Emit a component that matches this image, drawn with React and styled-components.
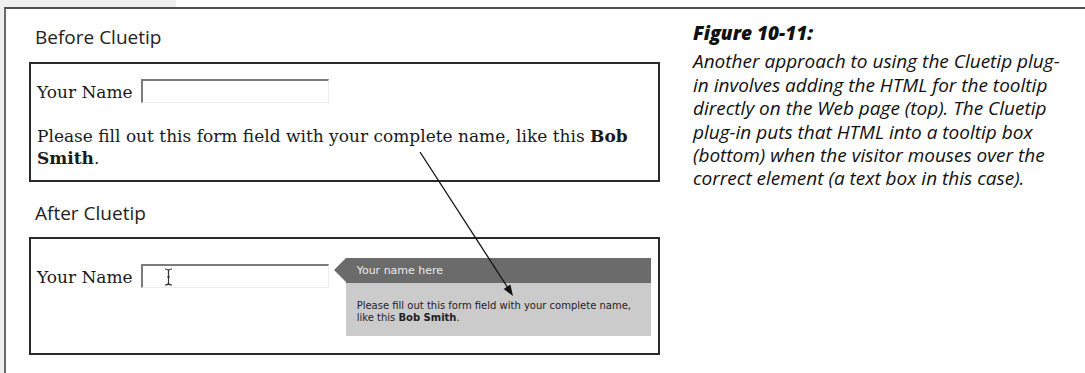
import styled, { createGlobalStyle } from "styled-components";

const GlobalStyle = createGlobalStyle`
  html, body {
    margin: 0;
    padding: 0;
    background: #ffffff;
  }
  #root {
    width: 1085px;
    height: 373px;
    overflow: hidden;
  }
`;

const Page = styled.div`
  position: relative;
  width: 1085px;
  height: 373px;
  display: flex;
  flex-direction: column;
`;

const TopStrip = styled.div`
  width: 176px;
  height: 7px;
  background: #efefef;
`;

const FrameRow = styled.div`
  flex: 1;
  display: flex;
`;

const Gutter = styled.div`
  width: 4px;
  background: #efefef;
`;

const Frame = styled.div`
  flex: 1;
  display: flex;
  border-top: 2px solid #505050;
  border-left: 2px solid #6a6a6a;
`;

const Demo = styled.div`
  width: 631px;
  padding-left: 23px;
  display: flex;
  flex-direction: column;
`;

const Heading = styled.div`
  font-family: "Open Sans", "Noto Sans", sans-serif;
  font-size: 19px;
  line-height: 24px;
  color: #222;
  padding-left: 6px;
  margin-top: ${(p) => p.$top}px;
  margin-bottom: ${(p) => p.$bottom}px;
`;

const DemoBox = styled.div`
  height: ${(p) => p.$height}px;
  box-sizing: border-box;
  border: 2px solid #2a2a2a;
  padding: ${(p) => p.$padTop}px 6px 0 6px;
  font-family: "DejaVu Serif", Georgia, serif;
  font-size: 17px;
  color: #1a1a1a;
`;

const FieldRow = styled.div`
  display: flex;
  align-items: center;
  gap: 8px;
  margin-top: ${(p) => p.$top || 0}px;
`;

const Label = styled.span`
  line-height: 20px;
  padding-top: 1px;
`;

const InputWrap = styled.div`
  position: relative;
  display: flex;
`;

const NameInput = styled.input`
  width: 188px;
  height: 24px;
  box-sizing: border-box;
  margin: 0;
  padding: 0;
  border-top: 2px solid #7c7c7c;
  border-left: 2px solid #7c7c7c;
  border-right: 1px solid #ececec;
  border-bottom: 1px solid #ececec;
  background: #fff;
  outline: none;
`;

const Cursor = styled.svg`
  position: absolute;
  left: 23px;
  top: 4px;
  pointer-events: none;
`;

const Para = styled.p`
  margin: 22px 0 0 0;
  max-width: 610px;
  line-height: 22px;
`;

const AfterRow = styled.div`
  display: flex;
  align-items: flex-start;
`;

const Tooltip = styled.div`
  position: relative;
  width: 305px;
  margin-left: 17px;
  font-family: "DejaVu Sans", Verdana, sans-serif;
`;

const TipHead = styled.div`
  height: 25px;
  background: #6b6b6b;
  color: #ececec;
  font-size: 11px;
  line-height: 25px;
  padding-left: 11px;

  &::before {
    content: "";
    position: absolute;
    left: -12px;
    top: 0;
    border-style: solid;
    border-width: 12.5px 12px 12.5px 0;
    border-color: transparent #6b6b6b transparent transparent;
  }
`;

const TipBody = styled.div`
  height: 53px;
  box-sizing: border-box;
  background: #cbcbcb;
  color: #1e1e1e;
  font-size: 10px;
  line-height: 12px;
  padding: 17px 0 0 11px;

  b {
    font-weight: bold;
  }
`;

const Caption = styled.div`
  padding-left: 33px;
  padding-top: 13px;
  font-family: "Open Sans", Lato, sans-serif;
  font-style: italic;
  font-size: 19px;
  line-height: 23.4px;
  color: #111;
  white-space: nowrap;
`;

const FigureTitle = styled.div`
  font-weight: 800;
  margin-bottom: 5px;
`;

const Overlay = styled.svg`
  position: absolute;
  left: 0;
  top: 0;
  pointer-events: none;
`;

function Field({ withCursor }) {
  return (
    <InputWrap>
      <NameInput type="text" readOnly />
      {withCursor && (
        <Cursor width="9" height="18" viewBox="0 0 9 18">
          <path
            d="M1 1 Q4.5 1 4.5 3 Q4.5 1 8 1 M4.5 3 V15 M1 17 Q4.5 17 4.5 15 Q4.5 17 8 17 M3 9 H6"
            fill="none"
            stroke="#333"
            strokeWidth="1.2"
          />
        </Cursor>
      )}
    </InputWrap>
  );
}

export default function App() {
  return (
    <>
      <GlobalStyle />
      <Page>
        <TopStrip />
        <FrameRow>
          <Gutter />
          <Frame>
            <Demo>
              <Heading $top={16} $bottom={13}>Before Cluetip</Heading>
              <DemoBox $height={120} $padTop={15}>
                <FieldRow>
                  <Label>Your Name</Label>
                  <Field />
                </FieldRow>
                <Para>
                  Please fill out this form field with your complete name, like this{" "}
                  <b>Bob Smith</b>.
                </Para>
              </DemoBox>
              <Heading $top={19} $bottom={12}>After Cluetip</Heading>
              <DemoBox $height={118} $padTop={19}>
                <AfterRow>
                  <FieldRow $top={6}>
                    <Label>Your Name</Label>
                    <Field withCursor />
                  </FieldRow>
                  <Tooltip>
                    <TipHead>Your name here</TipHead>
                    <TipBody>
                      Please fill out this form field with your complete name,
                      <br />
                      like this <b>Bob Smith</b>.
                    </TipBody>
                  </Tooltip>
                </AfterRow>
              </DemoBox>
            </Demo>
            <Caption>
              <FigureTitle>Figure 10-11:</FigureTitle>
              Another approach to using the Cluetip plug-
              <br />
              in involves adding the HTML for the tooltip
              <br />
              directly on the Web page (top). The Cluetip
              <br />
              plug-in puts that HTML into a tooltip box
              <br />
              (bottom) when the visitor mouses over the
              <br />
              correct element (a text box in this case).
            </Caption>
          </Frame>
        </FrameRow>
        <Overlay width="1085" height="373" viewBox="0 0 1085 373">
          <line x1="420" y1="152" x2="508" y2="288" stroke="#111" strokeWidth="1.3" />
          <polygon points="513,296 503.7,289 510.4,284.6" fill="#111" />
        </Overlay>
      </Page>
    </>
  );
}
